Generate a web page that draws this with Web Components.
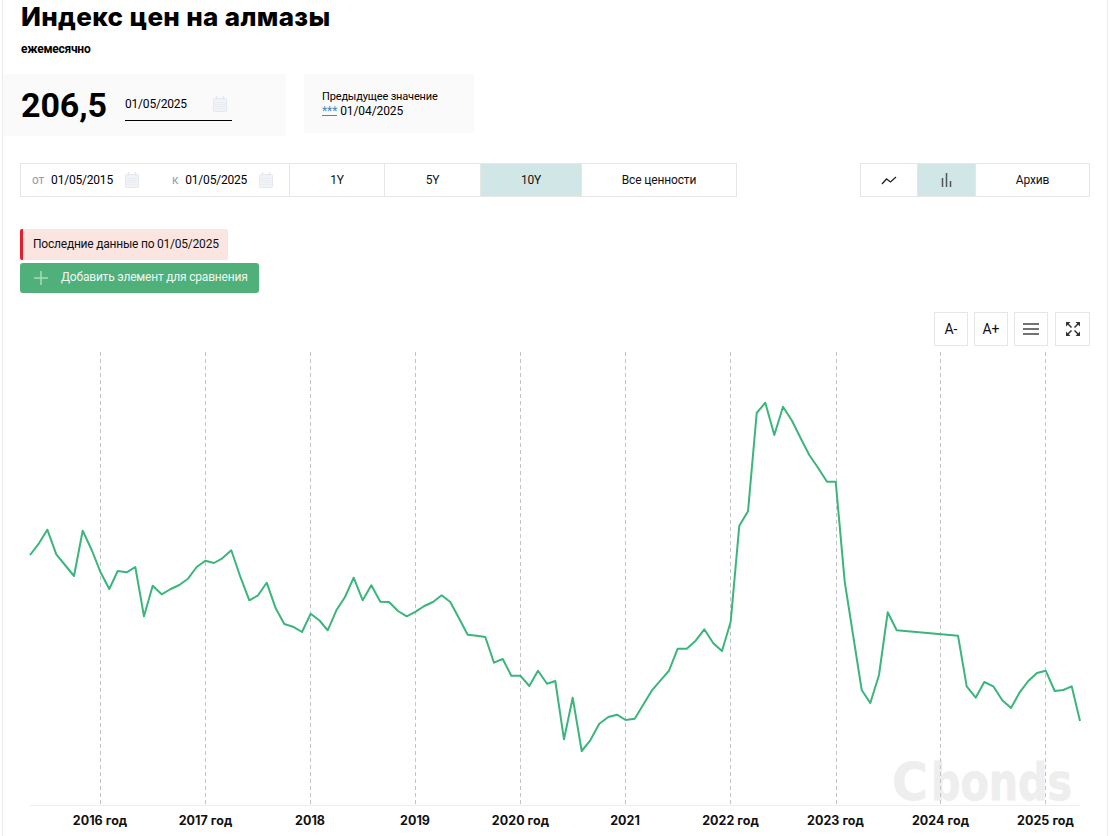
<!DOCTYPE html>
<html lang="ru"><head><meta charset="utf-8"><title>Индекс цен на алмазы</title>
<style>
html,body{margin:0;padding:0;background:#fff;overflow:hidden}
body{font-family:Roboto,"Liberation Sans",sans-serif;color:#000}
</style></head><body>
<diamond-page>
  <page-title sub="ежемесячно">Индекс цен на алмазы</page-title>
  <value-panels></value-panels>
  <range-toolbar></range-toolbar>
  <notice-block></notice-block>
  <chart-tools></chart-tools>
  <price-chart></price-chart>
</diamond-page>
<script>
const CAL=`<svg width="14" height="16" viewBox="0 0 14 16" fill="none"><rect x=".5" y="2.500" width="13" height="13" rx="1" fill="#f1f4f7" stroke="#e3e8ee"/><path d="M3.500 0v3.500M10.500 0v3.500" stroke="#e3e8ee" stroke-width="1.400"/><path d="M2.500 6.500h9M2.500 8.500h9M2.500 10.500h9M2.500 12.500h9" stroke="#d9dfe6" stroke-width=".6" stroke-dasharray="1 1"/></svg>`;
function def(name,html,init){customElements.define(name,class extends HTMLElement{connectedCallback(){if(this.shadowRoot)return;const r=this.attachShadow({mode:'open'});r.innerHTML=typeof html==='function'?html(this):html;init&&init(r,this);}});}

def('diamond-page',`<style>:host{display:block;box-sizing:border-box;width:1106px;height:836px;margin-left:2px;border-left:1px solid #ececec;border-right:1px solid #ececec;overflow:hidden}</style><slot></slot>`);

def('page-title',h=>`<style>
:host{display:block;padding:2px 0 0 18px}
h1{margin:0;font:800 26px/30px Inter,"Liberation Sans",sans-serif;letter-spacing:.34px;color:#000}
p{margin:9px 0 0;font:700 12px/16px Roboto,sans-serif;letter-spacing:-.25px}
</style><h1><slot></slot></h1><p>${h.getAttribute('sub')}</p>`);

def('date-field',h=>`<style>
:host{display:inline-flex;align-items:center;font:400 12px/14px Roboto,sans-serif;letter-spacing:-.2px;color:#000}
.l{color:#9b9ba3;margin-right:7px}
svg{display:block;margin-left:var(--cal-gap,12px)}
</style>${h.hasAttribute('label')?`<span class="l">${h.getAttribute('label')}</span>`:''}<span>${h.getAttribute('value')}</span>${CAL}`);

def('value-panels',`<style>
:host{display:flex;align-items:flex-start;gap:18px;margin:17px 0 0}
.a,.b{background:#fafafa;box-sizing:border-box}
.a{width:283px;height:62px;display:flex;align-items:center;padding-left:18px}
.n{font:700 34px/40px Roboto,sans-serif;width:104px;letter-spacing:-.1px}
.d{width:107px;height:29px;border-bottom:1px solid #000;display:flex;margin-top:2px}
date-field{--cal-gap:26px;height:26px}
.b{width:170px;height:59px;padding:16px 0 0 18px;font:400 11px/14px Roboto,sans-serif;letter-spacing:-.16px}
.s{font-size:12px;display:flex;gap:3px;letter-spacing:-.1px}
.s u{color:#4a86c5;text-decoration:none;border-bottom:1px solid #4a86c5;height:11px}
</style><div class="a"><div class="n">206,5</div><div class="d"><date-field value="01/05/2025"></date-field></div></div>
<div class="b"><div>Предыдущее значение</div><div class="s"><u>***</u><span>01/04/2025</span></div></div>`);

def('seg-btn',`<style>
:host{display:flex;align-items:center;justify-content:center;box-sizing:border-box;height:34px;border:1px solid #e6e6e6;margin-left:-1px;font:400 12px/14px Roboto,sans-serif;letter-spacing:-.15px;color:#111;background:#fff}
:host([on]){background:#d0e6e7}
</style><slot></slot>`);

def('range-toolbar',`<style>
:host{display:flex;justify-content:space-between;margin:27px 17px 0 17px}
.g{display:flex}
.dates{box-sizing:border-box;width:270px;height:34px;border:1px solid #e6e6e6;display:flex;align-items:center;padding-left:11px;gap:33px}
date-field{flex:none}
</style><div class="g"><div class="dates"><date-field label="от" value="01/05/2015"></date-field><date-field label="к" value="01/05/2025"></date-field></div>
<seg-btn style="width:96px">1Y</seg-btn><seg-btn style="width:97px">5Y</seg-btn><seg-btn style="width:102px" on>10Y</seg-btn><seg-btn style="width:156px">Все ценности</seg-btn></div>
<div class="g"><seg-btn style="width:58px"><svg width="16" height="9" viewBox="0 0 16 9" fill="none" style="display:block"><path d="M1 8 5.500 3 9.500 6 15 1" stroke="#222" stroke-width="1.300"/></svg></seg-btn><seg-btn style="width:59px" on><svg width="11" height="14" viewBox="0 0 11 14" fill="none" style="display:block"><path d="M1.500 14V5M5.500 14V0M9.500 14V8" stroke="#555" stroke-width="1.500"/></svg></seg-btn><seg-btn style="width:115px">Архив</seg-btn></div>`);

def('notice-block',`<style>
:host{display:block;margin:32px 0 0 17px}
.n{box-sizing:border-box;width:208px;height:31px;background:#fbe5e1;border-left:3px solid #e5202e;border-radius:2px;padding-left:10px;font:400 12px/30px Roboto,sans-serif;letter-spacing:-.22px;color:#111}
.b{box-sizing:border-box;width:239px;height:30px;margin-top:3px;background:#4fb07a;border-radius:3px;display:flex;align-items:center;padding-left:14px;gap:13px;font:400 12px/14px Roboto,sans-serif;letter-spacing:-.2px;color:#eef8f2}
.b span{margin-top:-2px}
svg{display:block}
</style><div class="n">Последние данные по 01/05/2025</div><div class="b"><svg width="14" height="14" viewBox="0 0 14 14"><path d="M7 0v14M0 7h14" stroke="#a9dcc0" stroke-width="1.500"/></svg><span>Добавить элемент для сравнения</span></div>`);

def('chart-tools',`<style>
:host{display:flex;justify-content:flex-end;gap:6px;margin:19px 17px 0 0}
div{box-sizing:border-box;width:34px;height:34px;border:1px solid #e6e6e6;display:flex;align-items:center;justify-content:center;font:400 14px/16px Roboto,sans-serif;color:#111}
.w{width:35px;margin-left:1px}
svg{display:block}
</style><div>A-</div><div>A+</div><div><svg width="16" height="12" viewBox="0 0 16 12"><path d="M0 1h16M0 6h16M0 11h16" stroke="#444" stroke-width="1.300"/></svg></div><div class="w"><svg width="16" height="16" viewBox="0 0 16 16"><path d="M1 1h4.500L1 5.500zM15 1v4.500L10.500 1zM1 15v-4.500L5.500 15zM15 15h-4.500L15 10.500z" fill="#333"/><path d="M2.500 2.500 6.500 6.500M13.500 2.500 9.500 6.500M2.500 13.500 6.500 9.500M13.500 13.500 9.500 9.500" stroke="#333" stroke-width="1.500" fill="none"/></svg></div>`);

const PTS=[[30,555],[39,543.3],[47.3,529.7],[56.3,554.3],[65,565],[74,576],[82.7,530.7],[91.7,550],[100.3,571.7],[109.3,589],[117.7,571],[126.7,572.3],[135.3,567],[144,616.3],[152.7,585.7],[161.7,594.3],[170.7,589],[179.3,585],[188,578.7],[196.7,567],[205.3,560.7],[214,563],[222.3,558.3],[231.3,550.3],[240.3,576.7],[249.3,600.3],[257.7,595.7],[266.7,582.7],[275.7,608.3],[284.3,624],[293,626.7],[302,632],[310.7,613.7],[319.5,620.5],[327.7,630.3],[336.7,609.7],[345,597],[353.7,577.7],[362.7,600.3],[371.3,585.3],[380.3,601.7],[389,602],[398,611],[406.7,616.3],[415.7,611.7],[424.3,606],[433,602],[441.7,595.3],[450.3,602],[459,618.3],[467.7,634.7],[476.7,635.7],[485.3,637],[494,662.7],[502.7,659],[511.3,675.7],[520.3,675.7],[529.3,686],[538,670.7],[547,683.7],[555.3,681],[564,739.3],[572.7,697.7],[581.7,751],[590.3,740.3],[599.3,723.7],[608.3,717],[617,714.7],[625.7,720],[634.7,718.7],[651.7,690.7],[669,670.7],[677.7,648.7],[686.7,648.7],[695.7,640.7],[704.3,629.3],[713.3,643.3],[722,651],[730.7,621.7],[739.3,525.7],[748,511.3],[756.7,413],[765.3,402.7],[774.3,435],[783,406.7],[792,420.7],[800.7,438.3],[809.3,455],[818,467.7],[827,481.7],[835.7,481.7],[844.7,581.7],[861.7,690],[870.3,703],[879,675],[887.7,612.3],[896.7,630.3],[958,635.7],[966.7,686.3],[975.7,697.7],[984.3,682],[993.3,686.3],[1002.3,700.3],[1011,708],[1019.7,692.3],[1028.3,681],[1037,673],[1045.7,670.7],[1054.7,691],[1063.3,690],[1071.7,686.3],[1080,721]];
const YEARS=[[100,'2016 год',100],[205.5,'2017 год',205],[310,'2018',310],[415,'2019',415],[520.5,'2020 год',520],[625,'2021',625],[730.5,'2022 год',730],[835.5,'2023 год',836],[940.5,'2024 год',940],[1045.5,'2025 год',1045]];
def('price-chart',()=>`<style>
:host{display:block;margin-top:6px}
svg{display:block;overflow:visible}
.y{font:700 12.5px Inter,"Liberation Sans",sans-serif;letter-spacing:.04px;fill:#111;text-anchor:middle}
.logo{font:700 52px "DejaVu Sans",sans-serif;fill:#eee;stroke:#eee;stroke-width:.8px}
</style><svg width="1104" height="484" viewBox="3 352 1104 484">
<text class="logo" y="800"><tspan x="892" textLength="36" lengthAdjust="spacingAndGlyphs">C</tspan><tspan x="931" textLength="141" lengthAdjust="spacingAndGlyphs">bonds</tspan></text>
<path d="M30 805.5H1080" stroke="#eeeeee"/>
${YEARS.map(([,,g])=>`<path d="M${g+.5} 352V806" stroke="#c4c4c8" stroke-dasharray="4 3"/>`).join('')}
<polyline fill="none" stroke="#3cb57c" stroke-width="2" stroke-linejoin="round" points="${PTS.map(p=>p.join(',')).join(' ')}"/>
${YEARS.map(([x,t])=>`<text class="y" x="${x}" y="825">${t}</text>`).join('')}
</svg>`);
</script></body></html>
